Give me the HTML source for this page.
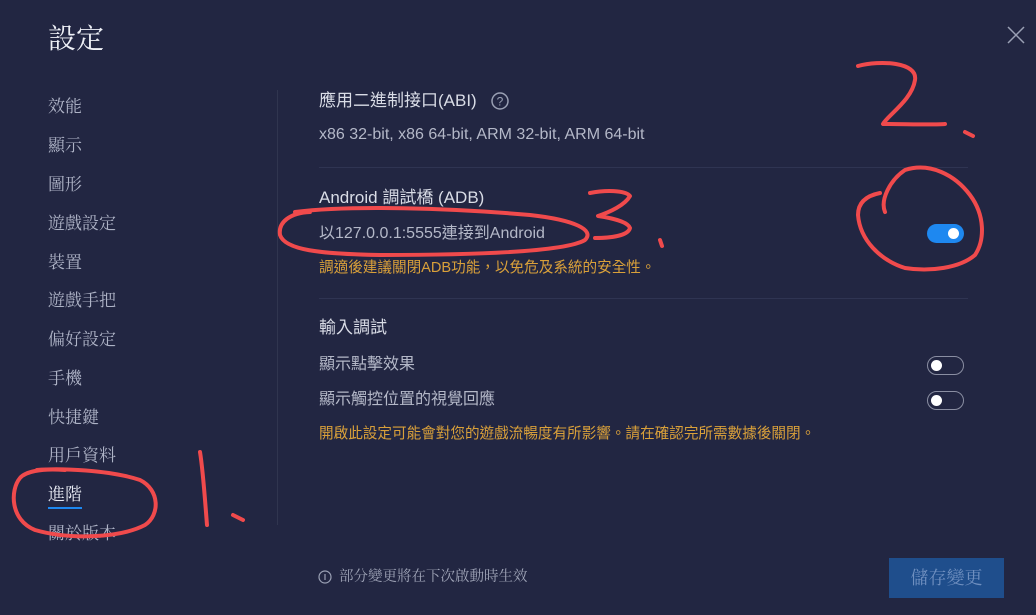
<!DOCTYPE html>
<html><head><meta charset="utf-8"><style>
*{margin:0;padding:0;box-sizing:border-box}
body{width:1036px;height:615px;background:#222642;position:relative;overflow:hidden;font-family:"Liberation Sans","Noto Sans CJK TC",sans-serif}
.a{position:absolute;white-space:nowrap}
.side{font-family:"Liberation Serif","Noto Serif CJK SC",serif;font-size:17px;color:#aeb3c6;left:48px;line-height:20px}
.t{color:#d9dce6;font-size:17px;left:319px;line-height:20px}
.s{color:#b4b8c8;font-size:16px;left:319px;line-height:20px}
.o{color:#d9a03a;font-size:14.6px;left:319px;line-height:20px}
.hr{position:absolute;left:319px;width:649px;height:1px;background:#2f3452}
.tg{position:absolute;width:37px;height:19px;border-radius:10px;left:927px}
.off{border:1.5px solid #8a8ea2}
.off i{position:absolute;left:3px;top:3px;width:11px;height:11px;border-radius:50%;background:#fff}
.on{background:#1e88f0}
.on i{position:absolute;right:5px;top:4px;width:11px;height:11px;border-radius:50%;background:#fff}
</style></head><body>
<div class="a" style="left:48px;top:22px;font-size:28px;color:#eef0f6;font-family:'Liberation Serif','Noto Serif CJK SC',serif;line-height:36px">設定</div>
<svg class="a" style="left:1006px;top:25px" width="20" height="20"><path d="M2 2L18 18M18 2L2 18" stroke="#9aa0b4" stroke-width="1.5"/></svg>
<div class="a" style="left:277px;top:90px;width:1px;height:435px;background:#30354f"></div>
<div class="a side" style="top:97px">效能</div>
<div class="a side" style="top:136px">顯示</div>
<div class="a side" style="top:175px">圖形</div>
<div class="a side" style="top:214px">遊戲設定</div>
<div class="a side" style="top:253px">裝置</div>
<div class="a side" style="top:291px">遊戲手把</div>
<div class="a side" style="top:330px">偏好設定</div>
<div class="a side" style="top:369px">手機</div>
<div class="a side" style="top:408px">快捷鍵</div>
<div class="a side" style="top:446px">用戶資料</div>
<div class="a side" style="top:485px;color:#e6e9f2">進階</div>
<div class="a" style="left:48px;top:507px;width:34px;height:2px;background:#1e88f0"></div>
<div class="a side" style="top:524px">關於版本</div>

<div class="a t" style="top:91px">應用二進制接口(ABI)</div>
<svg class="a" style="left:490px;top:91px" width="20" height="20"><circle cx="10" cy="10" r="8" fill="none" stroke="#9aa0b4" stroke-width="1.5"/><text x="10" y="14.5" font-size="12" fill="#9aa0b4" text-anchor="middle" font-family="Liberation Sans">?</text></svg>
<div class="a s" style="top:125px">x86 32-bit, x86 64-bit, ARM 32-bit, ARM 64-bit</div>
<div class="hr" style="top:167px"></div>
<div class="a t" style="top:188px">Android 調試橋 (ADB)</div>
<div class="a s" style="top:224px">以127.0.0.1:5555連接到Android</div>
<div class="tg on" style="top:224px"><i></i></div>
<div class="a o" style="top:258px">調適後建議關閉ADB功能，以免危及系統的安全性。</div>
<div class="hr" style="top:298px"></div>
<div class="a t" style="top:318px">輸入調試</div>
<div class="a s" style="top:355px">顯示點擊效果</div>
<div class="tg off" style="top:356px"><i></i></div>
<div class="a s" style="top:390px">顯示觸控位置的視覺回應</div>
<div class="tg off" style="top:391px"><i></i></div>
<div class="a o" style="top:424px">開啟此設定可能會對您的遊戲流暢度有所影響。請在確認完所需數據後關閉。</div>

<svg class="a" style="left:318px;top:570px" width="14" height="14"><circle cx="7" cy="7" r="6" fill="none" stroke="#9aa0b4" stroke-width="1.2"/><path d="M7 4v6" stroke="#9aa0b4" stroke-width="1.2"/></svg>
<div class="a" style="left:339px;top:567px;font-size:14.5px;color:#9ea3b6;line-height:20px;font-family:'Liberation Serif','Noto Serif CJK SC',serif">部分變更將在下次啟動時生效</div>
<div class="a" style="left:889px;top:558px;width:115px;height:40px;background:#1f4e8c;color:#6f8fbf;font-size:18px;line-height:40px;text-align:center;font-family:'Liberation Serif','Noto Serif CJK SC',serif">儲存變更</div>

<svg class="a" style="left:0;top:0" width="1036" height="615" fill="none" stroke="#f04a4c" stroke-width="4" stroke-linecap="round" stroke-linejoin="round">
<path d="M858 66C880 60 918 62 915 80C912 100 888 115 883 124C905 124 935 125 945 124"/>
<path d="M965 132l8 4"/>
<path d="M885 212C880 200 890 180 905 170C930 162 955 175 970 195C985 215 985 240 975 255C960 268 930 272 905 268C880 260 860 240 858 215C858 200 870 195 880 193"/>
<path d="M590 193C605 190 625 190 630 196C625 205 610 212 598 216C612 218 628 222 630 228C628 236 610 238 595 238"/>
<path d="M660 240l2 6"/>
<path d="M295 212C350 205 450 208 530 215C575 220 595 230 585 240C565 252 470 255 380 255C320 254 285 250 280 235C278 222 290 213 310 212"/>
<path d="M37 470C60 468 110 470 140 480C160 490 160 515 145 525C120 538 70 540 35 530C10 520 10 490 20 478C25 472 40 468 65 470"/>
<path d="M200 452C203 470 205 500 207 525"/>
<path d="M233 515l10 5"/>
</svg>
</body></html>
